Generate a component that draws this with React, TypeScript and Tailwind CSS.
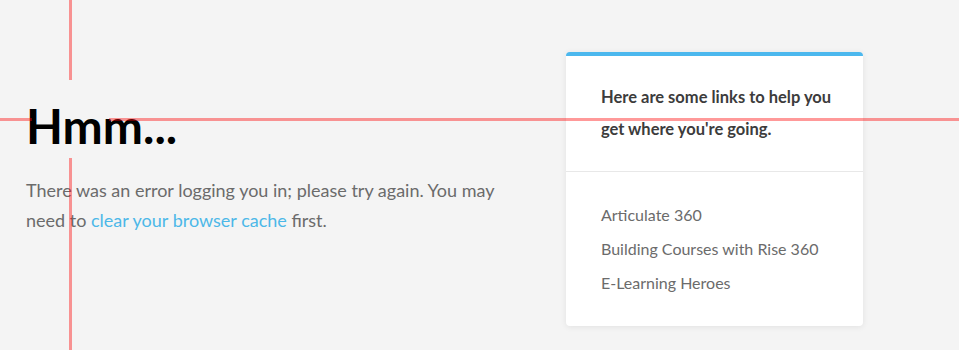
export default function App() {
	return (
		<div className="relative min-h-[350px] overflow-hidden bg-[#f4f4f4] font-['Lato',sans-serif]">
			<main className="flex items-start pl-[26px] pt-[52px]">
				<section className="w-[500px] pt-[44px]">
					<h1 className="text-[48px] font-bold leading-[60px] text-black">Hmm...</h1>
					<p className="mt-[19px] text-[18px] leading-[30px] text-[#6b6b6b]">
						There was an error logging you in; please try again. You may need to{' '}
						<a href="#" className="text-[#4cb8e8]">
							clear your browser cache
						</a>{' '}
						first.
					</p>
				</section>
				<aside className="ml-[40px] w-[297px] overflow-hidden rounded-[4px] border-t-4 border-[#4cb8ee] bg-white shadow-[0_1px_6px_rgba(0,0,0,0.08)]">
					<div className="border-b border-[#e8e8e8] pb-[26px] pl-[35px] pr-[28px] pt-[25px]">
						<h2 className="text-[16.5px] font-bold leading-[32px] text-[#3c3c3c]">
							Here are some links to help you get where you're going.
						</h2>
					</div>
					<ul className="px-[35px] pb-[26px] pt-[26px] text-[16px] leading-[34px] text-[#6b6b6b]">
						<li>
							<a href="#">Articulate 360</a>
						</li>
						<li>
							<a href="#">Building Courses with Rise 360</a>
						</li>
						<li>
							<a href="#">E-Learning Heroes</a>
						</li>
					</ul>
				</aside>
			</main>
			{/* crosshair overlay */}
			<div className="pointer-events-none absolute inset-0">
				<div className="absolute left-[69px] top-0 h-[80px] w-[3px] bg-[rgba(255,0,0,0.4)]" />
				<div className="absolute left-[69px] top-[158px] bottom-0 w-[3px] bg-[rgba(255,0,0,0.4)]" />
				<div className="absolute left-0 top-[118px] h-[3px] w-[32px] bg-[rgba(255,0,0,0.4)]" />
				<div className="absolute left-[109px] right-0 top-[118px] h-[3px] bg-[rgba(255,0,0,0.4)]" />
			</div>
		</div>
	);
}
